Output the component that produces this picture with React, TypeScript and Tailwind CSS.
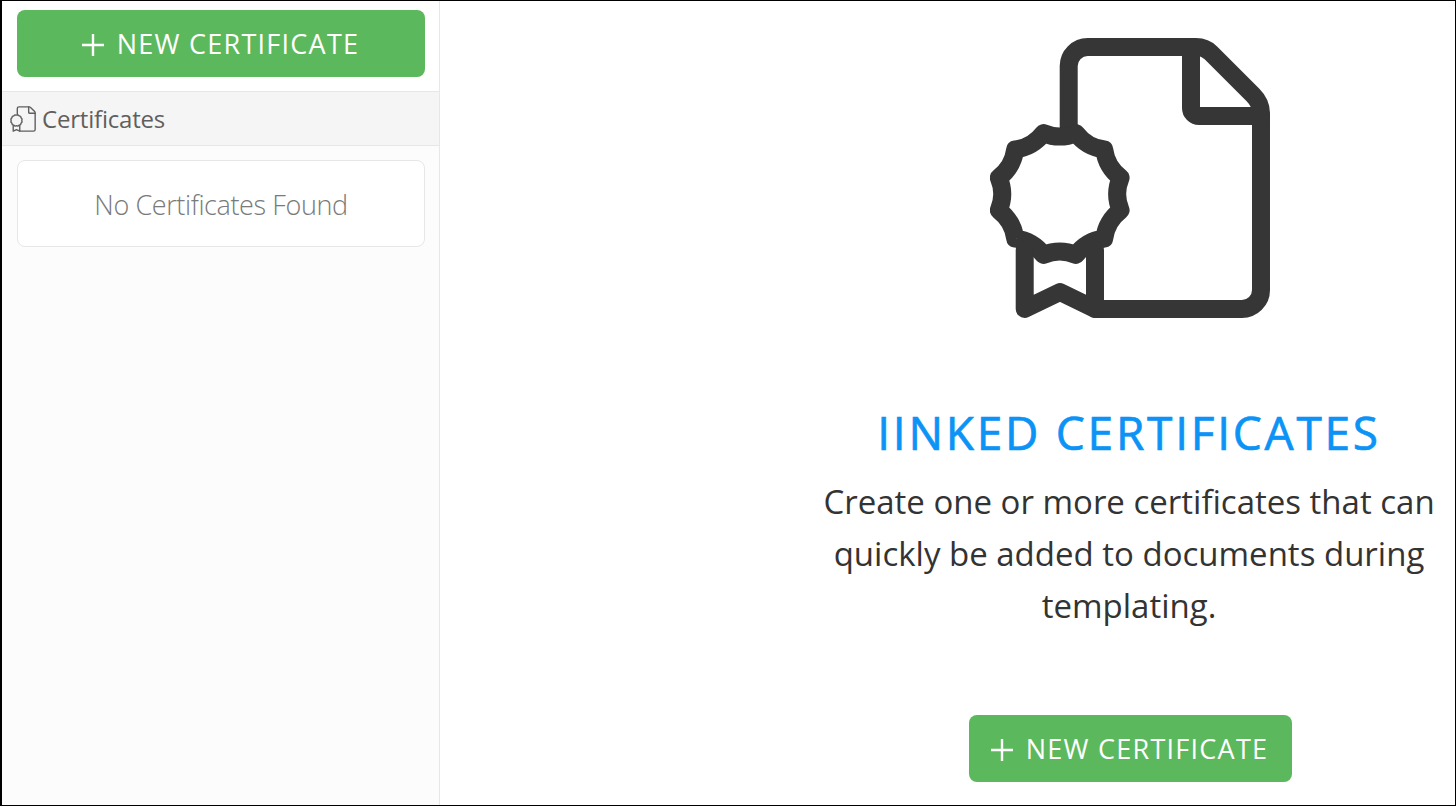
const SEAL_CX = 89.7;
const SEAL_CY = 174;

function polar(r: number, deg: number) {
  const a = (deg * Math.PI) / 180;
  return `${(SEAL_CX + r * Math.cos(a)).toFixed(1)} ${(SEAL_CY + r * Math.sin(a)).toFixed(1)}`;
}

// 12 point scalloped seal
const SEAL_PATH =
  `M${polar(63, 15)} ` +
  Array.from({ length: 12 }, (_, i) => {
    const start = 15 + i * 30;
    return `Q${polar(54, start + 15)} ${polar(63, start + 30)}`;
  }).join(" ") +
  " Z";

function CertificateIcon({ className, strokeWidth }: { className: string; strokeWidth: number }) {
  return (
    <svg
      className={className}
      viewBox="20 18 280 280"
      fill="none"
      stroke="currentColor"
      strokeWidth={strokeWidth}
      strokeLinecap="round"
      strokeLinejoin="round"
    >
      {/* page */}
      <path d="M98.7 110V46a19 19 0 0 1 19-19H226c6 0 11 2 15 6l42 42c5 5 8 11 8 18v177a19 19 0 0 1-19 19H125" />
      {/* fold */}
      <path d="M221 27V88a8 8 0 0 0 8 8H291" />
      {/* seal */}
      <path d={SEAL_PATH} />
      {/* ribbon */}
      <path d="M54.7 230V289L90 272L125 289V230" />
    </svg>
  );
}

function NewButton({ large }: { large?: boolean }) {
  return (
    <button
      className={`flex items-center justify-center gap-3 h-[67px] pr-[2px] pt-[2px] rounded-lg bg-[#5cb85c] text-white text-[27px] tracking-[1.25px] ${
        large ? "w-full" : "w-[323px]"
      }`}
    >
      <svg className="w-6 h-6" viewBox="0 0 24 24" stroke="currentColor" strokeWidth={2.4}>
        <path d="M12 1V23M1 12H23" />
      </svg>
      NEW CERTIFICATE
    </button>
  );
}

export default function App() {
  return (
    <div className="h-[806px] w-[1456px] flex border border-black border-l-2 overflow-hidden bg-white font-['Open_Sans',sans-serif] text-[#333333]">
      {/* Sidebar */}
      <aside className="w-[438px] shrink-0 bg-[#fcfcfc] border-r border-[#e7e7e7] flex flex-col">
        <div className="pl-[15px] pr-[14px] pt-[9px] pb-[14px] bg-white">
          <NewButton large />
        </div>
        <div className="h-[55px] flex items-center gap-[6px] pl-2 bg-[#f5f5f5] border-y border-[#e7e7e7] text-[24px] tracking-[-0.2px] text-[#5f5f5f]">
          <CertificateIcon className="w-[26px] h-[26px]" strokeWidth={15} />
          Certificates
        </div>
        <div className="pl-[15px] pr-[14px] pt-[14px]">
          <div className="h-[87px] pt-1 flex items-center justify-center bg-white border border-[#e7e7e7] rounded-lg text-[27px] tracking-[-0.4px] font-light text-[#7a7a7a]">
            No Certificates Found
          </div>
        </div>
      </aside>

      {/* Main */}
      <main className="flex-1 flex justify-end pr-[2px]">
        <div className="w-[648px] px-[10px] flex flex-col items-center text-center">
          <CertificateIcon className="w-[280px] h-[280px] mt-[37px] ml-[2px] shrink-0 text-[#363636]" strokeWidth={18} />
          <h1 className="mt-[84px] text-[46px] leading-[60px] font-normal tracking-[2.75px] [-webkit-text-stroke:0.7px_#0b93f6] text-[#0b93f6]">IINKED CERTIFICATES</h1>
          <p className="mt-[14px] text-[33px] leading-[52px]">
            Create one or more certificates that can quickly be added to documents during templating.
          </p>
          <div className="mt-[83px] ml-[2px]">
            <NewButton />
          </div>
        </div>
      </main>
    </div>
  );
}
